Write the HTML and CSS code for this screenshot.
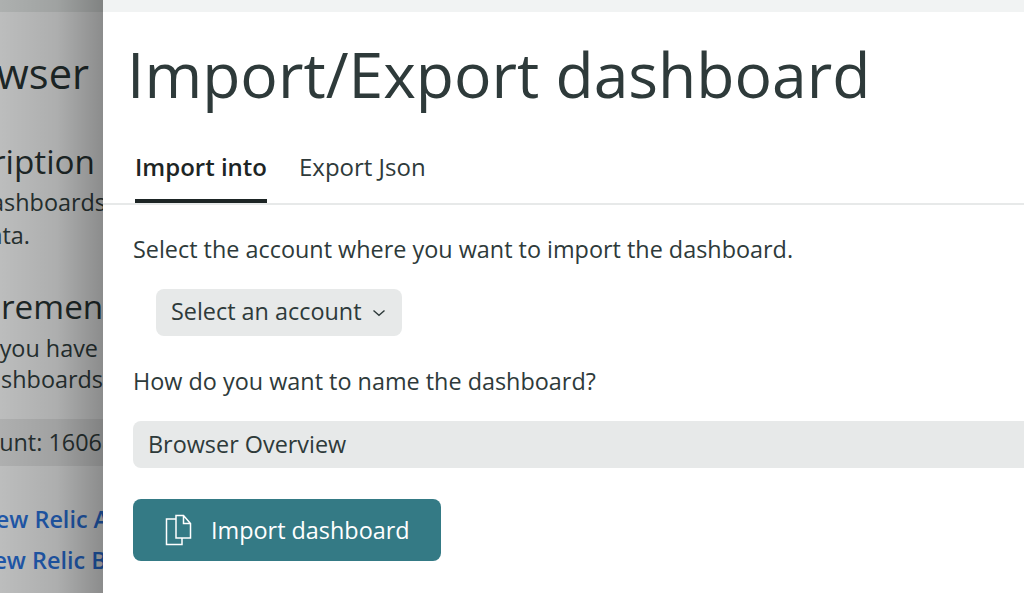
FILE: index.html
```html
<!DOCTYPE html>
<html lang="en">
<head>
<meta charset="utf-8">
<title>Import/Export dashboard</title>
<link rel="stylesheet" href="styles.css">
</head>
<body>
<div class="page">
  <aside class="backdrop">
    <div class="backdrop-top"></div>
    <div class="backdrop-inner">
      <h2 class="bg-title">Browser</h2>
      <h3 class="bg-heading bg-desc">Description</h3>
      <p class="bg-text bg-t1">View of dashboards</p>
      <p class="bg-text bg-t2">data.</p>
      <h3 class="bg-heading bg-req">Requirements</h3>
      <p class="bg-text bg-t3">Make sure you have</p>
      <p class="bg-text bg-t4">access to dashboards</p>
      <div class="bg-code"><span>Source account: 1606862</span></div>
      <a class="bg-link bg-apm">Docs: New Relic APM</a>
      <a class="bg-link bg-browser">Docs: New Relic Browser</a>
      <p class="bg-text bg-t5">Docs: Apdex</p>
    </div>
    <div class="shade"></div>
  </aside>
  <main class="modal">
    <div class="modal-top"></div>
    <div class="modal-body">
      <h1 class="title">Import/Export dashboard</h1>
      <nav class="tabs">
        <span class="tab active">Import into</span>
        <span class="tab">Export Json</span>
      </nav>
      <section class="form">
        <p class="label">Select the account where you want to import the dashboard.</p>
        <button class="select">Select an account
          <svg class="chev" width="14" height="8" viewBox="0 0 14 8"><path d="M1.500 1.500 7 6.300l5.500-4.800" fill="none" stroke="#2e3a3a" stroke-width="1.400"/></svg>
        </button>
        <p class="label label-name">How do you want to name the dashboard?</p>
        <div class="input">Browser Overview</div>
        <button class="primary">
          <svg class="copy" width="28" height="32" viewBox="0 0 28 32"><path d="M11 1.500h7.500l7 8V24H11z M18.500 1.500V9.500h7 M11 5H1.500v25.500H17V24" fill="none" stroke="#fff" stroke-width="1.500"/></svg>
          <span>Import dashboard</span>
        </button>
      </section>
    </div>
  </main>
</div>
</body>
</html>
```
FILE: styles.css
```css
* { box-sizing: border-box; }
html, body { margin: 0; padding: 0; height: 100%; overflow: hidden; }
body { font-family: "Open Sans", sans-serif; color: #2e3a3a; background: #fff; }
.page { display: flex; width: 1024px; height: 593px; overflow: hidden; }

.backdrop { position: relative; flex: 0 0 103px; overflow: hidden; background: #bcbdbd; }
.backdrop-top { height: 12px; background: #adb0af; }
.backdrop-inner { display: flex; flex-direction: column; align-items: flex-end; color: #1d2727; }
.backdrop-inner > * { white-space: nowrap; flex: none; }
.shade { position: absolute; inset: 0; background: linear-gradient(90deg, rgba(0,0,0,0) 0%, rgba(0,0,0,.08) 55%, rgba(0,0,0,.26) 100%); }
.bg-title { margin: 33px 14px 0 0; font-size: 41.600px; line-height: 56px; font-weight: 400; }
.bg-heading { margin: 0; font-size: 33.300px; line-height: 44px; font-weight: 400; }
.bg-desc { margin: 38px 8px 0 0; }
.bg-req { margin: 33px -28px 0 0; }
.bg-text { margin: 0; font-size: 23.400px; line-height: 32px; color: #263030; }
.bg-t1 { margin: 3px -3px 0 0; }
.bg-t2 { margin: 1px 73px 0 0; }
.bg-t3 { margin: 4px 5px 0 0; }
.bg-t4 { margin: -1px 0 0 0; }
.bg-code { margin-top: 24px; align-self: stretch; height: 47px; line-height: 47px; background: rgba(0,0,0,.07); font-size: 23.400px; display: flex; justify-content: flex-end; overflow: visible; }
.bg-code span { margin-right: -39px; flex: none; color: #263030; }
.bg-link { font-size: 23.400px; line-height: 40px; font-weight: 600; color: #1f57a8; }
.bg-apm { margin: 33px -42px 0 0; }
.bg-browser { margin: 1px -82px 0 0; }
.bg-t5 { margin: 6px 0 0 0; }

.modal { flex: 1; min-width: 0; display: flex; flex-direction: column; background: #fff; }
.modal-top { height: 12px; background: #f1f3f3; flex: none; }
.modal-body { padding-left: 30px; }
.title { margin: 22px 0 0 -6px; font-size: 62.400px; line-height: 80px; font-weight: 400; color: #2e3a3a; white-space: nowrap; }
.tabs { display: flex; gap: 32px; height: 79px; margin-left: -30px; padding-left: 32px; border-bottom: 2px solid #e7e9e9; align-items: stretch; margin-top: 12px; }
.tab { font-size: 24px; line-height: 46px; padding: 18px 0 0; height: 77px; color: #2e3a3a; }
.tab.active { font-weight: 600; color: #1d2525; border-bottom: 4px solid #1d2525; }
.form { display: flex; flex-direction: column; align-items: flex-start; }
.label { margin: 28px 0 0; font-size: 23.400px; line-height: 32px; color: #2e3a3a; }
.select { margin: 24px 0 0 23px; display: flex; align-items: center; gap: 10px; height: 47px; width: 246px; padding: 0 15px 3px; border: 0; border-radius: 8px; background: #e7e9e9; font: 400 23.400px "Open Sans", sans-serif; color: #2e3a3a; white-space: nowrap; }
.chev { margin-top: 3px; }
.label-name { margin-top: 29px; }
.input { margin-top: 24px; width: 1000px; height: 47px; line-height: 47px; padding-left: 15px; background: #e7e9e9; border-radius: 8px 0 0 8px; font-size: 23.400px; color: #2e3a3a; }
.primary { margin-top: 31px; display: flex; align-items: center; gap: 18px; width: 308px; height: 62px; padding: 0 0 0 32px; border: 0; border-radius: 8px; background: #347a85; color: #fff; font: 400 23.400px "Open Sans", sans-serif; }
.copy { flex: none; }
```
